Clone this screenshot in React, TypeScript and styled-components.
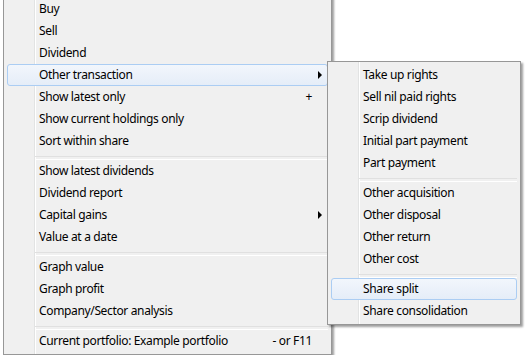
import React from "react";
import styled, { createGlobalStyle, css } from "styled-components";

const Global = createGlobalStyle`
  html, body { margin: 0; padding: 0; background: #ffffff; }
  body { font-family: "Segoe UI", "Noto Sans", "Open Sans", sans-serif; }
  * { box-sizing: border-box; }
`;

const Page = styled.div`
  position: relative;
  width: 527px;
  height: 355px;
  overflow: hidden;
  background: #ffffff;
`;

const Menu = styled.div<{ $width: number }>`
  width: ${(p) => p.$width}px;
  border: 1px solid #979797;
  padding: 2px 3px;
  background: linear-gradient(
    to right,
    #f0f0f0 0,
    #f0f0f0 30px,
    #e2e3e3 30px,
    #e2e3e3 31px,
    #ffffff 31px,
    #ffffff 32px,
    #f0f0f0 32px
  );
  box-shadow: 2px 2px 2px rgba(0, 0, 0, 0.38);
  display: flex;
  flex-direction: column;
`;

const MainMenu = styled(Menu)`
  margin: -5px 0 0 3px;
`;

const SubMenu = styled(Menu)`
  position: absolute;
  left: 327px;
  top: 61px;
`;

const Item = styled.div<{ $active?: boolean }>`
  height: 22px;
  display: grid;
  grid-template-columns: 1fr auto 10px;
  align-items: center;
  padding: 0 5px 0 31px;
  border: 1px solid transparent;
  border-radius: 3px;
  font-size: 12px;
  letter-spacing: -0.35px;
  line-height: 20px;
  color: #000000;
  white-space: nowrap;
  ${(p) =>
    p.$active &&
    css`
      border-color: #abcdf3;
      background: linear-gradient(to bottom, #f2f6fc, #e5edf8);
    `}
`;

const Label = styled.span``;

const Shortcut = styled.span`
  justify-self: end;
`;

const Arrow = styled.span`
  justify-self: end;
  width: 0;
  height: 0;
  border-left: 4px solid #000000;
  border-top: 4px solid transparent;
  border-bottom: 4px solid transparent;
`;

const Separator = styled.div`
  height: 8px;
  padding: 4px 0 0 28px;
  &::after {
    content: "";
    display: block;
    height: 2px;
    border-top: 1px solid #e0e0e0;
    border-bottom: 1px solid #ffffff;
  }
`;

type Entry =
  | { sep: true }
  | { label: string; shortcut?: string; sub?: boolean; active?: boolean };

const mainItems: Entry[] = [
  { label: "Buy" },
  { label: "Sell" },
  { label: "Dividend" },
  { label: "Other transaction", sub: true, active: true },
  { label: "Show latest only", shortcut: "+" },
  { label: "Show current holdings only" },
  { label: "Sort within share" },
  { sep: true },
  { label: "Show latest dividends" },
  { label: "Dividend report" },
  { label: "Capital gains", sub: true },
  { label: "Value at a date" },
  { sep: true },
  { label: "Graph value" },
  { label: "Graph profit" },
  { label: "Company/Sector analysis" },
  { sep: true },
  { label: "Current portfolio: Example portfolio", shortcut: "- or F11" },
];

const subItems: Entry[] = [
  { label: "Take up rights" },
  { label: "Sell nil paid rights" },
  { label: "Scrip dividend" },
  { label: "Initial part payment" },
  { label: "Part payment" },
  { sep: true },
  { label: "Other acquisition" },
  { label: "Other disposal" },
  { label: "Other return" },
  { label: "Other cost" },
  { sep: true },
  { label: "Share split", active: true },
  { label: "Share consolidation" },
];

const renderEntries = (entries: Entry[]) =>
  entries.map((e, i) =>
    "sep" in e ? (
      <Separator key={i} />
    ) : (
      <Item key={i} $active={e.active}>
        <Label>{e.label}</Label>
        <Shortcut>{e.shortcut ?? ""}</Shortcut>
        {e.sub ? <Arrow /> : <span />}
      </Item>
    )
  );

export default function App() {
  return (
    <Page>
      <Global />
      <MainMenu $width={329}>{renderEntries(mainItems)}</MainMenu>
      <SubMenu $width={194}>{renderEntries(subItems)}</SubMenu>
    </Page>
  );
}
